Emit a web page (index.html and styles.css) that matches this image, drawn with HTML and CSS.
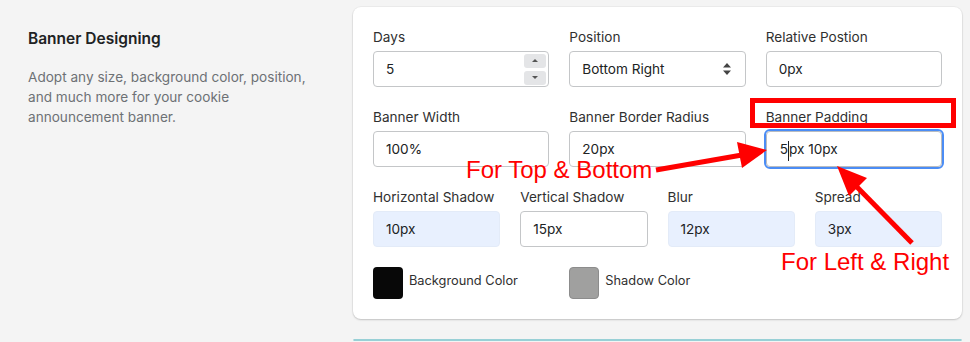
FILE: index.html
```html
<!DOCTYPE html>
<html lang="en">
<head>
  <meta charset="UTF-8" />
  <meta name="viewport" content="width=device-width, initial-scale=1.0"/>
  <title>Banner Designing</title>
  <link rel="stylesheet" href="styles.css">
</head>
<body>
  <div class="page">
    <div class="aside">
      <h2 class="aside-title">Banner Designing</h2>
      <p class="aside-text">Adopt any size, background color, position, and much more for your cookie announcement banner.</p>
    </div>

    <div class="main">
      <div class="card">
        <div class="grid grid-3">
          <div class="field">
            <div class="label">Days</div>
            <div class="input input-number">
              <span>5</span>
              <div class="spin">
                <div class="spin-btn"><span class="tri tri-up"></span></div>
                <div class="spin-btn"><span class="tri tri-down"></span></div>
              </div>
            </div>
          </div>
          <div class="field">
            <div class="label">Position</div>
            <div class="input input-select">
              <span>Bottom Right</span>
              <svg class="chev" width="10" height="14" viewBox="0 0 10 14">
                <path d="M5 1 L9 5.5 H1 Z M5 13 L9 8.5 H1 Z" fill="#444"/>
              </svg>
            </div>
          </div>
          <div class="field">
            <div class="label">Relative Postion</div>
            <div class="input">0px</div>
          </div>

          <div class="field">
            <div class="label">Banner Width</div>
            <div class="input">100%</div>
          </div>
          <div class="field">
            <div class="label">Banner Border Radius</div>
            <div class="input">20px</div>
          </div>
          <div class="field">
            <div class="label">Banner Padding</div>
            <div class="input input-focus">5<span class="caret"></span>px 10px</div>
          </div>
        </div>

        <div class="grid grid-4">
          <div class="field">
            <div class="label">Horizontal Shadow</div>
            <div class="input input-fill">10px</div>
          </div>
          <div class="field">
            <div class="label">Vertical Shadow</div>
            <div class="input">15px</div>
          </div>
          <div class="field">
            <div class="label">Blur</div>
            <div class="input input-fill">12px</div>
          </div>
          <div class="field">
            <div class="label">Spread</div>
            <div class="input input-fill">3px</div>
          </div>
        </div>

        <div class="grid grid-3">
          <div class="swatch-item">
            <div class="swatch swatch-black"></div>
            <span>Background Color</span>
          </div>
          <div class="swatch-item">
            <div class="swatch swatch-gray"></div>
            <span>Shadow Color</span>
          </div>
        </div>
      </div>

      <div class="card card-next"></div>
    </div>
  </div>

  <!-- annotation layer drawn over the screenshot -->
  <svg class="notes" width="970" height="342" viewBox="0 0 970 342">
    <rect x="752.5" y="100.5" width="201" height="25" fill="none" stroke="#ff0000" stroke-width="5"/>
    <line x1="656" y1="170" x2="742" y2="155" stroke="#ff0000" stroke-width="5"/>
    <polygon points="767,150 742,168 737,142" fill="#ff0000"/>
    <line x1="912" y1="243" x2="856" y2="186" stroke="#ff0000" stroke-width="5"/>
    <polygon points="837,166 867,178 849,196" fill="#ff0000"/>
    <text x="466" y="178" class="note-text">For Top &amp; Bottom</text>
    <text x="781" y="270" class="note-text">For Left &amp; Right</text>
  </svg>
</body>
</html>
```

FILE: styles.css
```css
body {
  margin: 0;
  background-color: #f4f4f4;
  font-family: Inter, 'Noto Sans', sans-serif;
  color: #202223;
  position: relative;
  overflow: hidden;
}

.page {
  display: flex;
  padding-top: 7px;
}

.aside {
  width: 353px;
  padding-left: 28px;
  flex-shrink: 0;
  box-sizing: border-box;
}

.aside-title {
  margin: 20px 0 0;
  font-size: 15.5px;
  line-height: 24px;
  font-weight: 600;
  color: #202223;
}

.aside-title + .aside-text {
  margin-top: 16px;
}

.aside-text {
  margin: 0;
  max-width: 285px;
  font-size: 13.6px;
  line-height: 20px;
  color: #6d7175;
}

.main {
  flex: 1;
  margin-right: 8px;
  display: flex;
  flex-direction: column;
  gap: 20px;
}

.card {
  background-color: #ffffff;
  border-radius: 8px;
  padding: 20px;
  box-shadow: 0 1px 2px rgba(0, 0, 0, 0.18), 0 0 0 1px rgba(0, 0, 0, 0.03);
  display: flex;
  flex-direction: column;
  gap: 20px;
}

.card-next {
  height: 0;
  padding: 0;
  border: 1.5px solid #98d0d6;
  background-color: #f3fafb;
  box-shadow: none;
}

.grid {
  display: grid;
  column-gap: 20px;
  row-gap: 20px;
}

.grid-3 {
  grid-template-columns: repeat(3, 1fr);
}

.grid-4 {
  grid-template-columns: repeat(4, 1fr);
}

.label {
  font-size: 13.6px;
  line-height: 20px;
  margin-bottom: 4px;
  color: #303030;
}

.input {
  height: 36px;
  box-sizing: border-box;
  border: 1px solid #c4c6c8;
  border-radius: 4px;
  padding: 0 12px;
  display: flex;
  align-items: center;
  font-size: 13.6px;
  color: #202223;
  background-color: #ffffff;
}

.input-number,
.input-select {
  justify-content: space-between;
}

.input-number {
  padding-right: 2px;
}

.spin {
  display: flex;
  flex-direction: column;
  gap: 3px;
}

.spin-btn {
  width: 22px;
  height: 14px;
  background-color: #e4e5e7;
  border-radius: 3px;
  display: flex;
  align-items: center;
  justify-content: center;
}

.tri {
  width: 0;
  height: 0;
  border-left: 3px solid transparent;
  border-right: 3px solid transparent;
}

.tri-up {
  border-bottom: 3px solid #555;
}

.tri-down {
  border-top: 3px solid #555;
}

.chev {
  margin-right: 1px;
}

.input-focus {
  outline: 2px solid #4b8df5;
  border-color: #b9bcc0;
  padding-left: 13px;
}

.caret {
  display: inline-block;
  width: 1px;
  height: 20px;
  background-color: #202223;
  margin-top: 4px;
}

.input-fill {
  background-color: #e8f0fe;
  border-color: #e3ebf8;
}

.swatch-item {
  display: flex;
  align-items: center;
  gap: 6px;
  font-size: 12.8px;
  color: #303030;
}

.swatch-item span {
  margin-bottom: 6px;
}

.swatch {
  width: 30px;
  height: 32px;
  border-radius: 4px;
  box-sizing: border-box;
}

.swatch-black {
  background-color: #080808;
}

.swatch-gray {
  background-color: #a0a09f;
  border: 1px solid #8c8c8c;
}

.notes {
  position: absolute;
  top: 0;
  left: 0;
  pointer-events: none;
}

.note-text {
  font-family: 'Liberation Sans', Arial, sans-serif;
  font-size: 24px;
  fill: #ff0000;
}
```
